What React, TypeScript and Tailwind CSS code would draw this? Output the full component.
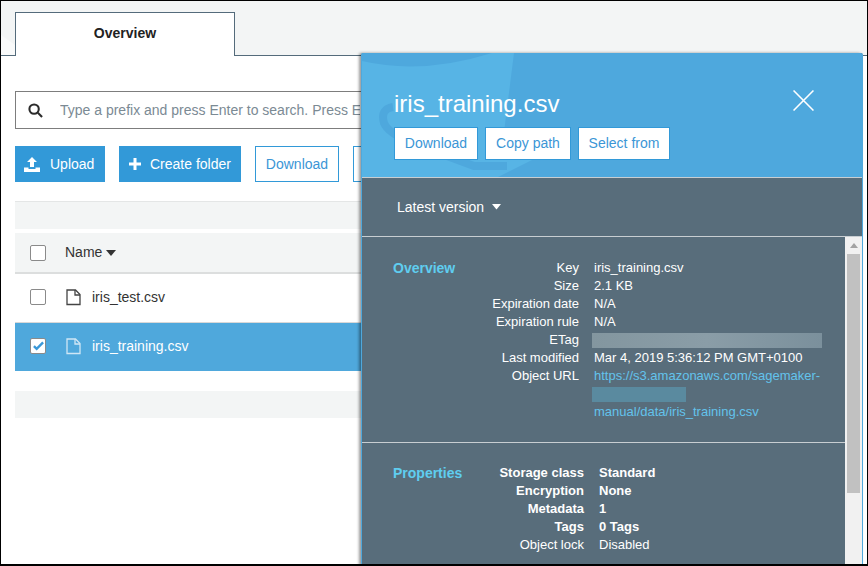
import { type FC } from "react";

const font = { fontFamily: '"Liberation Sans", Arial, sans-serif' };

const Row: FC<{ label: string; children?: React.ReactNode; labelW: string; bold?: boolean }> = ({
	label,
	children,
	labelW,
	bold,
}) => (
	<div className={`flex h-[18px] items-center text-[13px] leading-[18px] text-white ${bold ? "font-bold" : ""}`}>
		<div className={`${labelW} shrink-0 text-right`}>{label}</div>
		<div className="ml-[15px] whitespace-nowrap">{children}</div>
	</div>
);

const FileIcon: FC<{ className?: string }> = ({ className }) => (
	<svg viewBox="0 0 15 17" className={className} fill="none" stroke="currentColor" strokeWidth="1.3">
		<path d="M1 1h8.5L14 5.500V15.500H1z" />
		<path d="M9 1v5h5" />
	</svg>
);

const Caret: FC<{ className?: string }> = ({ className }) => (
	<svg viewBox="0 0 10 6" className={className} fill="currentColor">
		<path d="M0 0h10L5 6z" />
	</svg>
);

const Box: FC<{ checked?: boolean }> = ({ checked }) => (
	<div className="flex size-[16px] items-center justify-center rounded-[2px] border border-[#8a8a8a] bg-white">
		{checked && (
			<svg viewBox="0 0 12 10" className="w-[11px] text-[#3a98d8]" fill="none" stroke="currentColor" strokeWidth="2.600">
				<path d="M1 5.500l3 3L11 1.500" />
			</svg>
		)}
	</div>
);

const OverviewTab = () => (
	<div className="relative flex h-[55px] items-end border-b border-[#546b7b] bg-[#f3f5f5] pl-[14px]">
		<svg viewBox="0 0 14 54" className="absolute top-0 left-0 h-[54px] w-[14px]">
			<path d="M0 34L14 44V54H0z" fill="#f9fafa" />
		</svg>
		<div className="relative -mb-px flex h-[44px] w-[220px] items-center justify-center border border-b-0 border-[#546b7b] bg-white pb-[2px] text-[14px] font-bold text-[#222]">
			Overview
		</div>
	</div>
);

const Toolbar = () => (
	<div className="mt-[17px] flex h-[36px] gap-[14px] text-[14px]">
		<div className="flex w-[90px] items-center bg-[#3299d8] pl-[9px] text-white">
			<svg viewBox="0 0 16 15" className="h-[15px] w-[16px]" fill="currentColor">
				<path d="M8 0l5 5H10v5H6V5H3z" />
				<path d="M0 10.500h4.500V12h7v-1.500H16V15H0z" />
			</svg>
			<span className="ml-[10px]">Upload</span>
		</div>
		<div className="flex w-[122px] items-center bg-[#3299d8] pl-[10px] text-white">
			<svg viewBox="0 0 12 12" className="size-[12px]" fill="currentColor">
				<path d="M4.500 0h3v4.500H12v3H7.500V12h-3V7.500H0v-3h4.500z" />
			</svg>
			<span className="ml-[9px]">Create folder</span>
		</div>
		<div className="flex w-[84px] items-center justify-center border border-[#3299d8] bg-white text-[#3b96d6]">Download</div>
		<div className="w-[40px] border border-[#3299d8] bg-white" />
	</div>
);

const FileTable = () => (
	<div className="mt-[19px]">
		<div className="h-[28px] border-t border-[#e4e6e6] bg-[#f3f5f5]" />
		<div className="mt-[4px] flex h-[41px] items-center border-b-2 border-[#dcdede] bg-[#f3f5f5] pl-[15px] text-[14px] text-[#333]">
			<Box />
			<span className="ml-[19px]">Name</span>
			<Caret className="ml-[4px] w-[10px] text-[#333]" />
		</div>
		<div className="flex h-[49px] items-center border-b border-[#d8d8d8] pb-[2px] pl-[15px] text-[14px] text-[#333]">
			<Box />
			<FileIcon className="ml-[20px] h-[17px] w-[15px] text-[#444]" />
			<span className="ml-[11px]">iris_test.csv</span>
		</div>
		<div className="flex h-[48px] items-center bg-[#4fa8dc] pb-[2px] pl-[15px] text-[14px] text-white">
			<Box checked />
			<FileIcon className="ml-[20px] h-[17px] w-[15px] text-[#cfe6f5]" />
			<span className="ml-[11px]">iris_training.csv</span>
		</div>
		<div className="mt-[20px] h-[27px] bg-[#f3f5f5]" />
	</div>
);

const DetailPanel = () => (
	<div className="absolute top-[52px] left-[360px] flex h-[513px] w-[502px] flex-col overflow-hidden rounded-t-[2px] border-x border-[#4fa8dc] bg-[#586d7b] shadow-[-2px_0_3px_rgba(0,0,0,0.4)]">
		<div className="relative h-[125px] shrink-0 overflow-hidden border-b border-[#c8ced2] bg-[#4ea8dd]">
			<svg viewBox="0 0 175 125" className="absolute top-0 left-0 h-[125px] w-[175px]">
				<path d="M0 0H152L141 87V107H170L134 125H0z" fill="#57b4e5" />
				<path d="M0 8Q60 22 130 0H0z" fill="#4ea8dd" />
				<path d="M31 54Q18 56 22 70Q26 80 50 90L112 113H145" fill="none" stroke="#4ea8dd" strokeWidth="8" />
			</svg>
			<div className="relative pt-[37px] pl-[32px]">
				<div className="text-[24px] leading-[28px] text-white">iris_training.csv</div>
				<div className="mt-[9px] flex gap-[7px] text-[14px] text-[#3b96d6]">
					<div className="flex h-[33px] w-[84px] items-center justify-center border border-[#3299d8] bg-white">Download</div>
					<div className="flex h-[33px] w-[86px] items-center justify-center border border-[#3299d8] bg-white">Copy path</div>
					<div className="flex h-[33px] w-[92px] items-center justify-center border border-[#3299d8] bg-white">Select from</div>
				</div>
			</div>
			<svg viewBox="0 0 20 20" className="absolute top-[37px] right-[48px] size-[21px] text-white" fill="none" stroke="currentColor" strokeWidth="1.500">
				<path d="M0.500 0.500l19 19M19.500 0.500l-19 19" />
			</svg>
		</div>
		<div className="flex h-[59px] shrink-0 items-center border-b border-[#c8ced2] pl-[35px] text-[14px] text-white">
			Latest version
			<Caret className="ml-[8px] w-[9px] text-white" />
		</div>
		<div className="flex min-h-0 flex-1">
			<div className="min-w-0 flex-1">
				<div className="flex h-[206px] items-start border-b border-[#c8ced2] pt-[22px] pl-[31px]">
					<div className="w-[90px] shrink-0 text-[14px] leading-[18px] font-bold text-[#5fcdf0]">Overview</div>
					<div className="-ml-[1px]">
						<Row label="Key" labelW="w-[97px]">iris_training.csv</Row>
						<Row label="Size" labelW="w-[97px]">2.1 KB</Row>
						<Row label="Expiration date" labelW="w-[97px]">N/A</Row>
						<Row label="Expiration rule" labelW="w-[97px]">N/A</Row>
						<Row label="ETag" labelW="w-[97px]">
							<div className="-ml-[2px] h-[15px] w-[230px] bg-gradient-to-r from-[#83969f] via-[#8a9da7] to-[#7b909c]" />
						</Row>
						<Row label="Last modified" labelW="w-[97px]">Mar 4, 2019 5:36:12 PM GMT+0100</Row>
						<Row label="Object URL" labelW="w-[97px]">
							<span className="text-[#63c3ec]">https://s3.amazonaws.com/sagemaker-</span>
						</Row>
						<Row label="" labelW="w-[97px]">
							<div className="-ml-[2px] h-[15px] w-[94px] bg-[#5a8a9f]" />
						</Row>
						<Row label="" labelW="w-[97px]">
							<span className="text-[#63c3ec]">manual/data/iris_training.csv</span>
						</Row>
					</div>
				</div>
				<div className="flex items-start pt-[21px] pl-[31px]">
					<div className="w-[90px] shrink-0 text-[14px] leading-[18px] font-bold text-[#5fcdf0]">Properties</div>
					<div className="font-bold">
						<Row label="Storage class" labelW="w-[101px]" bold>Standard</Row>
						<Row label="Encryption" labelW="w-[101px]" bold>None</Row>
						<Row label="Metadata" labelW="w-[101px]" bold>1</Row>
						<Row label="Tags" labelW="w-[101px]" bold>0 Tags</Row>
						<div className="flex h-[18px] items-center text-[13px] leading-[18px] font-normal text-white">
							<div className="w-[101px] shrink-0 text-right">Object lock</div>
							<div className="ml-[15px]">Disabled</div>
						</div>
					</div>
				</div>
			</div>
			<div className="flex w-[17px] shrink-0 flex-col bg-[#f1f1f1]">
				<div className="flex h-[17px] items-center justify-center">
					<svg viewBox="0 0 8 5" className="w-[8px] text-[#a3a3a3]" fill="currentColor">
						<path d="M4 0l4 5H0z" />
					</svg>
				</div>
				<div className="mx-[2px] h-[239px] bg-[#c1c1c1]" />
			</div>
		</div>
	</div>
);

export default function App() {
	return (
		<div className="relative h-[566px] w-[868px] overflow-hidden border border-b-2 border-black bg-white" style={font}>
			<OverviewTab />
			<div className="px-[14px]">
				<div className="mt-[35px] flex h-[38px] items-center border border-[#7d7d7d] pl-[12px] text-[14px] whitespace-nowrap text-[#7b8a94]">
					<svg viewBox="0 0 16 16" className="size-[15px] shrink-0 text-[#2b2b2b]" fill="none" stroke="currentColor" strokeWidth="2.200">
						<circle cx="6.500" cy="6.500" r="5" />
						<path d="M10.500 10.500L15 15" />
					</svg>
					<span className="ml-[17px] w-[300px] overflow-hidden">Type a prefix and press Enter to search. Press ESC to clear.</span>
				</div>
				<Toolbar />
				<FileTable />
			</div>
			<DetailPanel />
		</div>
	);
}
